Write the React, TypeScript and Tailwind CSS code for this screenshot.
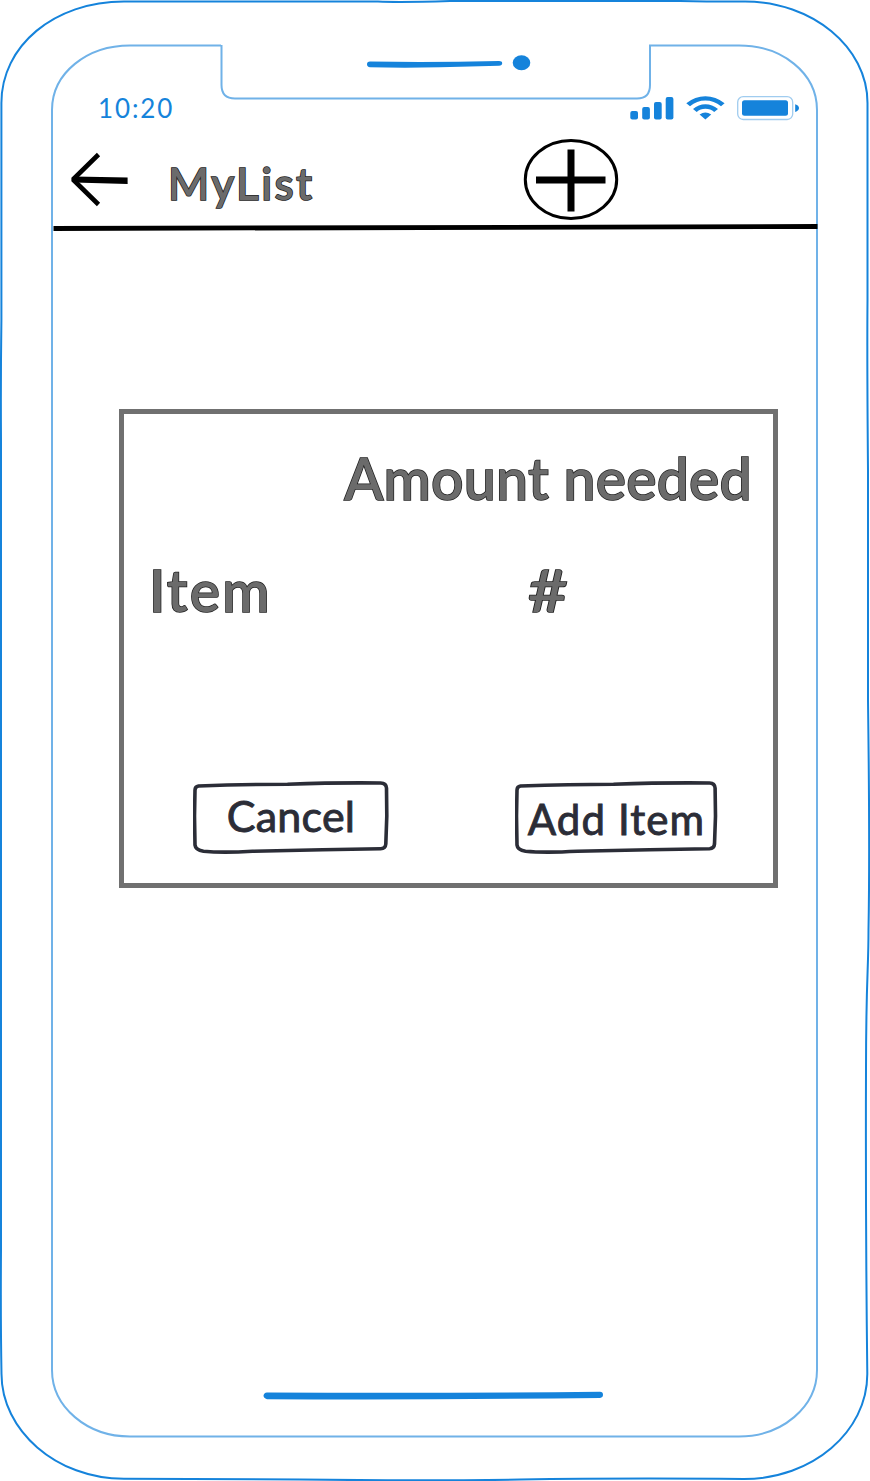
import type { ReactNode } from "react";

const BLUE = "#1583db";
const PALE = "#70b2e8";
const INK = "#2b2d37";

function DeviceFrame() {
  return (
    <svg className="pointer-events-none absolute inset-0" width="870" height="1481" viewBox="0 0 870 1481" fill="none" aria-hidden="true">
      <g stroke={BLUE} strokeWidth="2">
        <path d="M1 898V440Q.6 380 1.4 320V103C1.400 46 54 1.500 124 1.500H378Q400 2.500 450 1H680Q710 1.600 745 1.500C812 1.500 867.500 47 867.500 103V300Q867 360 868 470V700Q870 850 868.500 930C868.500 970 866 980 866 1070Q865.500 1220 867.300 1374C867.300 1432 812 1479 744 1479Q620 1478 520 1479.500T300 1479.500L124 1478.800C56 1478.800 1.500 1430 1.500 1374Q.5 1320 1 1250V898" />
      </g>
      <path
        d="M221 45.500H130C87 45.500 52 73 52 110V1370C52 1407 87 1436.500 130 1436.500H739C782 1436.500 817 1407 817 1370V110C817 73 782 45.500 739 45.500H650V85Q650 98.500 637 98.500H235Q221.500 98.500 221.500 85V45"
        stroke={PALE}
        strokeWidth="2"
      />
      <path d="M370 61.500Q430 62.500 499 61Q502.200 61 502.200 63.300Q502.200 65.500 499 65.700L440 67.300Q400 68 370 67.200Q367 67 367 64.300Q367 61.500 370 61.500Z" fill={BLUE} />
      <ellipse cx="521.500" cy="62.700" rx="8.800" ry="7.500" fill={BLUE} />
      <path d="M267 1392.400Q430 1393.400 600 1391.700Q603 1391.800 603 1394.800Q603 1397.500 600 1397.900Q420 1400.200 267 1399.200Q263.500 1398.500 263.500 1395.600Q263.800 1392.700 267 1392.400Z" fill={BLUE} />
    </svg>
  );
}

function StatusIcons() {
  return (
    <svg width="170" height="26" viewBox="630 95 170 26" fill={BLUE} aria-hidden="true">
      <rect x="630.300" y="111" width="7.700" height="8.600" rx="2" />
      <rect x="642.200" y="107" width="7.700" height="12.600" rx="2" />
      <rect x="654" y="102" width="7.700" height="17.600" rx="2" />
      <rect x="665.700" y="97" width="7.700" height="22.600" rx="2" />
      <path d="M686.300 103.200Q695 96.200 705.400 96.200T724.600 103.200L721 106.300Q714 100.600 705.400 100.600T690 106.300Z" />
      <path d="M693 109Q698.500 104.300 705.400 104.300T718 109L714.200 112Q710.500 108.800 705.400 108.800T696.700 112Z" />
      <path d="M699.600 114.600Q705.400 110.600 711.200 114.600L705.400 119.500Z" />
      <rect x="737.700" y="96.700" width="55" height="22.800" rx="5.500" fill="none" stroke="#a0ccef" strokeWidth="1.300" />
      <rect x="742" y="100.300" width="46" height="15.500" rx="2.500" />
      <path d="M795.200 104.200Q799 105.500 799 108T795.200 112Z" />
    </svg>
  );
}

function BackArrow() {
  return (
    <svg width="60" height="56" viewBox="70 152 60 56" fill="none" stroke="#000" aria-hidden="true">
      <path d="M98.500 154.500L73 179.500L98.500 204.500" strokeWidth="4.600" strokeLinejoin="bevel" />
      <path d="M74 176.500L127.600 177.400V184L74 182.400Z" fill="#000" stroke="none" />
    </svg>
  );
}

function PlusCircle() {
  return (
    <svg width="96" height="82" viewBox="523 138 96 82" fill="none" stroke="#000" aria-hidden="true">
      <ellipse cx="571" cy="179.500" rx="45.700" ry="39" strokeWidth="3" />
      <path d="M536 180H605.500M571 149.500V211.500" strokeWidth="7" />
    </svg>
  );
}

function SketchButton({ children, className, outline, width }: { children: ReactNode; className: string; outline: string; width: number }) {
  return (
    <button type="button" className={`relative flex h-[74px] justify-center ${className}`}>
      <svg className="absolute inset-0" width={width} height="74" viewBox={`0.5 0 ${width} 74`} fill="none" aria-hidden="true">
        <path d={outline} stroke={INK} strokeWidth="3.600" strokeLinejoin="round" />
      </svg>
      {children}
    </button>
  );
}

const heading =
  "whitespace-nowrap font-semibold text-[#6b6b6b] [-webkit-text-stroke:1.5px_#202020] [paint-order:stroke_fill]";

export default function App() {
  return (
    <div className="relative h-[1481px] w-[870px] overflow-hidden bg-white font-['Lato',sans-serif]">
      <DeviceFrame />

      <div className="flex h-[134px] items-start justify-between pl-[98px] pr-[70px] pt-[93px]">
        <span className="whitespace-nowrap text-[26px] leading-[30px] tracking-[1.900px] text-[#1583db]">10:20</span>
        <div className="pt-[2px]">
          <StatusIcons />
        </div>
      </div>

      <header className="flex h-[90px] items-start pl-[70px]">
        <button type="button" aria-label="Back" className="mt-[18px]">
          <BackArrow />
        </button>
        <h1 className={`ml-[38px] mt-[22px] w-[355px] text-[44px] leading-[54px] tracking-[2.400px] ${heading}`}>MyList</h1>
        <button type="button" aria-label="Add" className="mt-[4px]">
          <PlusCircle />
        </button>
      </header>

      <svg className="relative ml-[53px] block overflow-visible" width="765" height="8" viewBox="53 224 765 8" aria-hidden="true">
        <path d="M53.500 228.500L817.500 226.500" stroke="#000" strokeWidth="4.800" />
      </svg>

      <section className="ml-[119px] mt-[177px] h-[479px] w-[659px] border-[5px] border-[#707070] bg-white">
        <div className="flex h-[112px] justify-end pr-[21px] pt-[29px]">
          <h2 className={`text-[57px] leading-[70px] tracking-[0.250px] ${heading}`}>Amount needed</h2>
        </div>
        <div className="flex h-[255px] pl-[25px] pt-[29px]">
          <span className={`w-[379px] text-[57px] leading-[70px] tracking-[2.200px] ${heading}`}>Item</span>
          <span className={`origin-left scale-x-120 text-[57px] leading-[70px] ${heading}`}>#</span>
        </div>
        <div className="flex gap-[126px] pl-[69px] text-[#2b2d37]">
          <SketchButton
            className="w-[196px]"
            width={196}
            outline="M6 5Q50 3.300 95 3.200Q145 1.500 188 2Q193.800 2.300 194 7L194.300 35L193.300 63Q193 67.500 188 67.700L130 68.800L60 70.300Q30 72 11 70.300Q3 69 2.500 64L2 35L2.500 9Q2.600 5.600 6 5Z"
          >
            <span className="relative mt-[8px] whitespace-nowrap text-[43px] font-normal leading-[53px] tracking-[0.200px] [-webkit-text-stroke:0.900px_#2b2d37]">Cancel</span>
          </SketchButton>
          <SketchButton
            className="w-[203px]"
            width={203}
            outline="M6 5Q55 3.300 99 3.200Q150 1.500 195 2Q200.300 2.300 200.600 7L201 35L200 63Q199.600 67.500 195 67.700L135 68.800L63 70.300Q30 72 11 70.300Q3 69 2.500 64L2 35L2.500 9Q2.600 5.600 6 5Z"
          >
            <span className="relative mt-[12px] whitespace-nowrap text-[42px] font-normal leading-[53px] tracking-[1.100px] [-webkit-text-stroke:0.900px_#2b2d37]">Add Item</span>
          </SketchButton>
        </div>
      </section>
    </div>
  );
}
